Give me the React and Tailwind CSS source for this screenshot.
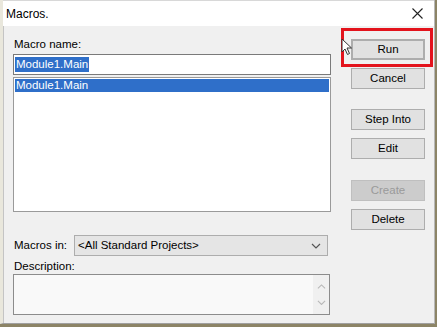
import React from 'react';

const font = { fontFamily: '"Liberation Sans", Arial, sans-serif' };

const Btn = ({ children, className = '', disabled }) => (
  <div
    className={`h-[21px] w-[74px] flex items-center justify-center border text-[11.5px] ${
      disabled ? 'bg-[#cccccc] border-[#bfbfbf] text-[#9a9a9a]' : 'bg-[#e1e1e1] border-[#adadad] text-black'
    } ${className}`}
  >
    {children}
  </div>
);

const Chevron = ({ up, color = '#606060', size = 10 }) => (
  <svg width={size} height={size * 0.6} viewBox="0 0 10 6">
    <path d={up ? 'M1 5 L5 1 L9 5' : 'M1 1 L5 5 L9 1'} fill="none" stroke={color} strokeWidth="1.2" />
  </svg>
);

export default function App() {
  return (
    <div className="relative w-[437px] h-[327px] overflow-hidden bg-[#8c8466]" style={font}>
      <div className="w-[435px] h-[324px] bg-[#f0f0f0] border-l-[3px] border-l-[#e9e7dc] border-r border-r-[#b8b8b8] border-b border-b-[#a0a0a0] flex flex-col">
        {/* title bar */}
        <div className="h-[26px] bg-white flex items-center justify-between pl-[3px] pr-[11px] border-t border-[#d8d8d8]">
          <span className="text-[12px] text-black">Macros.</span>
          <svg width="11" height="11" viewBox="0 0 11 11">
            <path d="M0.5 0.5 L10.5 10.5 M10.5 0.5 L0.5 10.5" stroke="#222" strokeWidth="1.1" />
          </svg>
        </div>

        {/* body */}
        <div className="flex flex-1 border-l border-[#c4c4c4]">
          <div className="w-[318px] ml-[9px] flex flex-col">
            <div className="mt-[11px] h-[14px] leading-[14px] text-[11.5px] pl-[1px]">Macro name:</div>
            <div className="mt-[3px] h-[21px] bg-white border border-[#7a7a7a] flex items-center px-[1px]">
              <span className="bg-[#2f6fc9] text-white text-[11.5px] leading-[15px] px-[1px]">Module1.Main</span>
            </div>
            <div className="mt-[2px] h-[135px] bg-white border border-[#9a9a9a] p-[1px]">
              <div className="h-[13px] bg-[#2f6fc9] text-white text-[11.5px] leading-[13px] pl-[1px]">Module1.Main</div>
            </div>
            <div className="mt-[23px] flex items-center">
              <span className="w-[61px] text-[11.5px] pl-[1px]">Macros in:</span>
              <div className="w-[254px] h-[21px] bg-[#e5e5e5] border border-[#adadad] flex items-center justify-between pl-[3px] pr-[6px]">
                <span className="text-[11.5px]">&lt;All Standard Projects&gt;</span>
                <Chevron color="#555" />
              </div>
            </div>
            <div className="mt-[4px] h-[13px] leading-[13px] text-[11.5px] pl-[1px]">Description:</div>
            <div className="mt-[1px] h-[41px] w-[317px] bg-[#f9f9f9] border border-[#8c8c8c] flex justify-end">
              <div className="w-[16px] bg-[#f0f0f0] flex flex-col items-center justify-between py-[9px]">
                <Chevron up color="#b8b8b8" size={9} />
                <Chevron color="#b8b8b8" size={9} />
              </div>
            </div>
          </div>

          <div className="ml-[20px] flex flex-col">
            <Btn className="mt-[13px] border-[#0078d7] border-2">Run</Btn>
            <Btn className="mt-[8px]">Cancel</Btn>
            <Btn className="mt-[20px]">Step Into</Btn>
            <Btn className="mt-[8px]">Edit</Btn>
            <Btn className="mt-[21px]" disabled>Create</Btn>
            <Btn className="mt-[8px]">Delete</Btn>
          </div>
        </div>
      </div>

      {/* red highlight box */}
      <div className="absolute left-[341px] top-[28px] w-[92px] h-[39px] border-[3px] border-[#e3131c]" />

      {/* mouse cursor */}
      <svg className="absolute left-[341px] top-[38px]" width="12" height="18" viewBox="0 0 12 18">
        <path d="M1 1 L1 14 L4 11 L6.5 16.5 L8.5 15.5 L6 10 L10.5 10 Z" fill="white" stroke="#333" strokeWidth="1" />
      </svg>
    </div>
  );
}
